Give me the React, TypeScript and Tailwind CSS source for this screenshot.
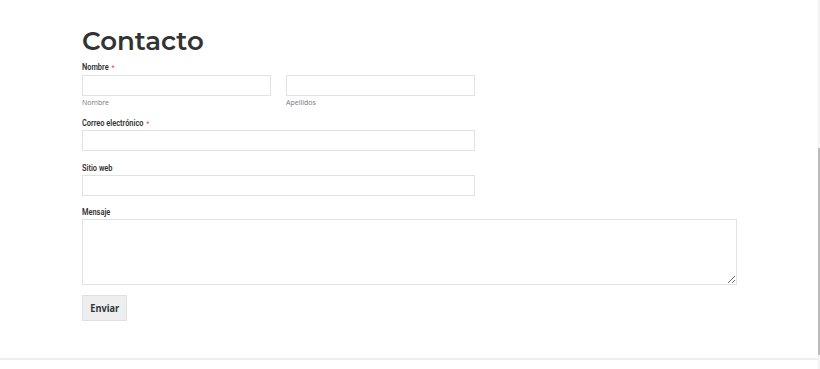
import React from 'react';

const label = "block h-[12px] text-[9.5px] font-semibold leading-[12px] text-[#333] font-['Roboto',sans-serif]";
const labelText = "inline-block origin-left scale-x-[0.78] whitespace-nowrap";
const input = "block h-[21px] w-full border border-[#e2e2e2] bg-white outline-none";

function Label({ text, required }: { text: string; required?: boolean }) {
  return (
    <span className={label}>
      <span className={labelText}>
        {text}
        {required && <span className="ml-[4px] text-[8px] font-normal text-[#f22]">*</span>}
      </span>
    </span>
  );
}

export default function App() {
  return (
    <div className="relative h-[369px] w-[820px] overflow-hidden bg-white font-['Open_Sans',sans-serif]">
      <div className="pl-[82px] pt-[25px]">
        <h1 className="font-['Montserrat','Open_Sans',sans-serif] text-[26px] font-semibold leading-[32px] text-[#333]">
          Contacto
        </h1>

        <div className="mt-[4px]">
          <Label text="Nombre" required />
          <div className="mt-[2px] flex gap-[15px]">
            <div className="w-[189px]">
              <input className={input} />
              <div className="mt-[2px] text-[7px] leading-[10px] text-[#777]">Nombre</div>
            </div>
            <div className="w-[189px]">
              <input className={input} />
              <div className="mt-[2px] text-[7px] leading-[10px] text-[#777]">Apellidos</div>
            </div>
          </div>
        </div>

        <div className="mt-[9px] w-[393px]">
          <Label text="Correo electrónico" required />
          <input className={`${input} mt-[1px]`} />
        </div>

        <div className="mt-[11px] w-[393px]">
          <Label text="Sitio web" />
          <input className={`${input} mt-[1px]`} />
        </div>

        <div className="mt-[10px] w-[655px]">
          <Label text="Mensaje" />
          <textarea className="mt-[1px] block h-[66px] w-full resize-y border border-[#e2e2e2] bg-white outline-none" />
        </div>

        <button className="mt-[10px] h-[26px] w-[45px] border border-[#e0e0e0] bg-[#eeeeee] font-['Open_Sans',sans-serif] text-[10px] font-bold text-[#2b3440]">
          <span className="inline-block scale-x-[0.92]">Enviar</span>
        </button>
      </div>

      <div className="absolute bottom-[9px] left-0 h-[2px] w-[818px] bg-[#eeeeee]" />
      <div className="absolute right-0 top-0 h-full w-[2px] bg-[#f3f3f3]">
        <div className="mt-[148px] h-[207px] w-full bg-[#bbbbbb]" />
      </div>
    </div>
  );
}
